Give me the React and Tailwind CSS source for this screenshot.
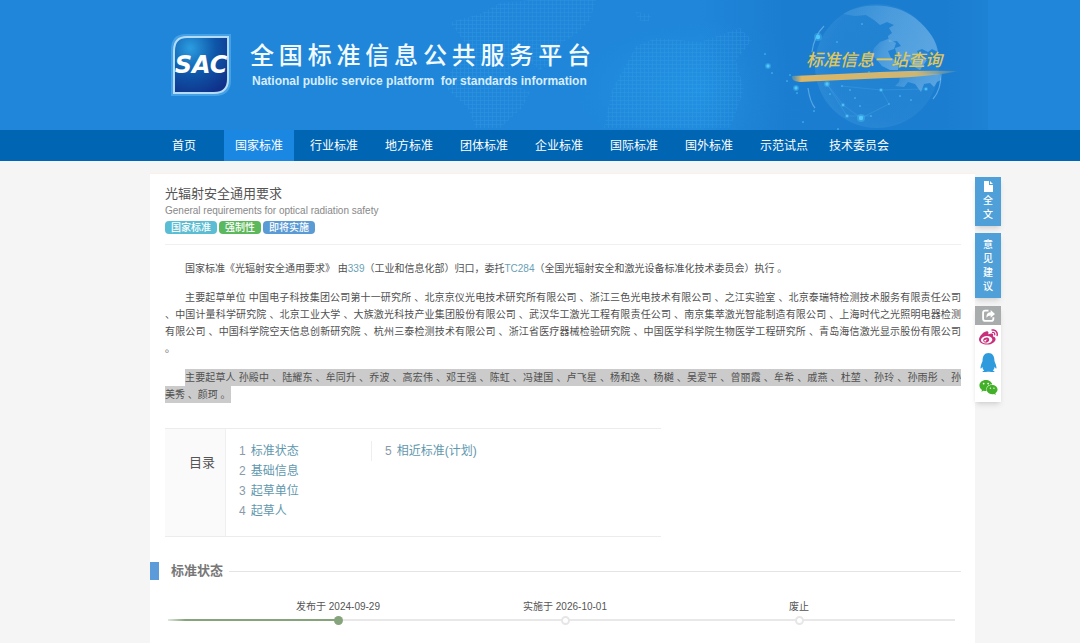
import React from 'react'
import { FaWeixin, FaQq, FaWeibo } from 'react-icons/fa'

const navItems = ['首页', '国家标准', '行业标准', '地方标准', '团体标准', '企业标准', '国际标准', '国外标准', '示范试点', '技术委员会']

const badges = [
  { label: '国家标准', className: 'bg-[#5bbdd3]' },
  { label: '强制性', className: 'bg-[#5cb85c]' },
  { label: '即将实施', className: 'bg-[#5b9bd5]' },
]

// each entry is one full line of the justified paragraph
const draftingUnits = [
  '、中国计量科学研究院 、北京工业大学 、大族激光科技产业集团股份有限公司 、武汉华工激光工程有限责任公司 、南京集萃激光智能制造有限公司 、上海时代之光照明电器检测',
  '有限公司 、中国科学院空天信息创新研究院 、杭州三泰检测技术有限公司 、浙江省医疗器械检验研究院 、中国医学科学院生物医学工程研究所 、青岛海信激光显示股份有限公司',
]

const tocLeft = ['标准状态', '基础信息', '起草单位', '起草人']

const dots = [
  [765, 54, 1], [768, 66, 3], [772, 73, 1], [790, 75, 1], [796, 88, 3], [797, 93, 1], [827, 84, 3], [818, 37, 4],
  [837, 42, 1], [830, 94, 1], [843, 105, 2], [855, 98, 1], [847, 116, 2], [861, 118, 4], [871, 116, 1], [881, 90, 2],
  [889, 104, 1], [860, 106, 1], [803, 122, 1], [838, 129, 1], [814, 111, 1], [869, 72, 1], [862, 24, 1], [926, 89, 2],
  [842, 86, 1], [850, 90, 1], [900, 96, 1], [911, 100, 1], [787, 81, 1],
]

function HeaderArt() {
  return (
    <svg className="absolute inset-0 h-full w-full" viewBox="0 0 1080 130" preserveAspectRatio="xMidYMid slice" aria-hidden="true">
      <defs>
        <pattern id="grid" width="4" height="4" patternUnits="userSpaceOnUse">
          <path d="M0 0H4M0 0V4" stroke="#46b4ee" strokeWidth="1" opacity=".55" />
        </pattern>
        <radialGradient id="shine" cx=".5" cy=".5" r=".5">
          <stop offset="0" stopColor="#2496e4" stopOpacity=".7" />
          <stop offset="1" stopColor="#2496e4" stopOpacity="0" />
        </radialGradient>
        <linearGradient id="shade" x1="0" x2="1">
          <stop offset="0" stopColor="#1b7ccf" stopOpacity="0" />
          <stop offset=".3" stopColor="#1b7ccf" stopOpacity=".9" />
          <stop offset=".85" stopColor="#1b7ccf" stopOpacity=".9" />
          <stop offset="1" stopColor="#1b7ccf" stopOpacity=".5" />
        </linearGradient>
        <radialGradient id="sphere" cx=".6" cy=".45" r=".6">
          <stop offset="0" stopColor="#4aa3e2" stopOpacity=".12" />
          <stop offset=".8" stopColor="#4aa3e2" stopOpacity=".18" />
          <stop offset="1" stopColor="#5cb0e8" stopOpacity=".22" />
        </radialGradient>
        <linearGradient id="land" x1="0" x2="1" y1="0" y2=".4">
          <stop offset="0" stopColor="#7dbbe9" stopOpacity=".15" />
          <stop offset=".5" stopColor="#7dbbe9" stopOpacity=".45" />
          <stop offset="1" stopColor="#86c0ec" stopOpacity=".55" />
        </linearGradient>
        <linearGradient id="brush" x1="0" x2="1">
          <stop offset="0" stopColor="#dcb765" stopOpacity=".2" />
          <stop offset=".06" stopColor="#dcb765" />
          <stop offset=".75" stopColor="#cdb574" />
          <stop offset="1" stopColor="#cdb574" stopOpacity=".1" />
        </linearGradient>
      </defs>
      <ellipse cx="700" cy="90" rx="130" ry="70" fill="url(#shine)" />
      <rect x="700" width="288" height="130" fill="url(#shade)" />
      <g fill="url(#grid)" opacity=".6">
        <path d="M450 22L480 14L500 3L530 0H596L590 20L576 34L560 44L552 62L540 70L528 60L508 70L512 84L530 92L522 108L500 128H476L468 108L448 90L450 72L470 50Z" />
        <path d="M636 12L652 14L648 22L638 20ZM636 46L656 38L700 42L740 28L752 40L736 60L744 90L730 128H604L612 90L622 72Z" />
      </g>
      <circle cx="877" cy="66" r="62" fill="url(#sphere)" />
      <g fill="url(#land)">
        <path d="M843 14C862 2 895 2 915 18C930 30 937 42 938 52L932 49L928 52L922 49L917 51L920 57L927 60L920 70L913 66L909 60L902 60L897 56L895 48L901 46L897 41L889 42L888 36L892 33L889 28L894 25L887 22L880 25L874 20L866 15L855 16Z" />
        <path d="M874 48L880 42L888 39L896 43L894 49L888 51L891 58L899 62L898 70L890 70L882 66L877 60L872 55Z" />
        <path d="M900 76L916 73L940 74L941 80L937 82L934 87L930 83L924 84L921 92L915 84L908 82L904 87L895 86L899 82Z" />
      </g>
      <path d="M812 52Q814 36 824 26M808 88Q810 102 815 108M941 74Q941 90 933 99" fill="none" stroke="#8fd0f6" strokeWidth="1.2" opacity=".5" />
      <path d="M841 86L881 90L889 104L861 118L843 105L827 84L847 116L871 116M881 90L926 89" fill="none" stroke="#55b4ee" strokeWidth=".5" opacity=".5" />
      {dots.map(([x, y, r]) => (
        <g key={`${x}-${y}`} fill="#4fc8fa">
          <circle cx={x} cy={y} r={r} opacity=".35" />
          <circle cx={x} cy={y} r={r * 0.55} />
        </g>
      ))}
      <path d="M792 76Q840 74 880 72Q925 70 958 71Q930 77 888 78Q840 80 800 82Q790 81 792 76Z" fill="url(#brush)" />
    </svg>
  )
}

function Logo() {
  return (
    <svg width="64" height="66" viewBox="0 0 64 66" role="img" aria-label="SAC" className="shrink-0">
      <defs>
        <radialGradient id="logoBg" cx=".3" cy=".2" r=".95">
          <stop offset="0" stopColor="#2b9de0" />
          <stop offset=".5" stopColor="#0e56a8" />
          <stop offset="1" stopColor="#102c86" />
        </radialGradient>
      </defs>
      <path d="M17 2H62V48Q62 64 46 64H2V18Q2 2 17 2Z" fill="#6cbcf2" opacity=".5" />
      <path d="M18 5H59V47Q59 61 45 61H5V19Q5 5 18 5Z" fill="url(#logoBg)" stroke="#b5dcfa" strokeWidth="2" />
      <text x="32" y="41" textAnchor="middle" fill="#fff" className="font-['DejaVu_Sans',sans-serif] text-[24px] font-bold italic">SAC</text>
    </svg>
  )
}

function Header() {
  return (
    <header>
      <div className="relative h-[130px] overflow-hidden bg-[#1f86d9]">
        <HeaderArt />
        <div className="relative flex h-full items-center justify-between pl-[169px] pr-[138px]">
          <div className="flex items-center gap-[17px]">
            <Logo />
            <div className="w-[341px] text-white">
              <h1 className="text-[24px] leading-[32px] font-medium text-[#f2faff] [text-align-last:justify]">全国标准信息公共服务平台</h1>
              <p className="whitespace-pre pl-0.5 text-[12px] leading-[18px] font-bold text-[#d8edfd]">National public service platform  for standards information</p>
            </div>
          </div>
          <p className="pb-2 text-[17px] leading-[24px] font-medium italic text-[#e0c75c]">标准信息一站查询</p>
        </div>
      </div>
      <nav className="bg-[#0065b3] pl-[149px]">
        <ul className="flex gap-[5px]">
          {navItems.map((item) => (
            <li key={item} className="w-[70px]">
              <a
                href="#"
                className={`block whitespace-nowrap pt-0.5 text-center text-[12px] leading-[29px] text-white ${item === '国家标准' ? 'bg-[#1a87e2]' : ''}`}
              >
                {item}
              </a>
            </li>
          ))}
        </ul>
      </nav>
    </header>
  )
}

function Toc() {
  return (
    <section className="mt-[25px] flex h-[109px] w-[496px] border-y border-[#ececec]">
      <h2 className="w-[61px] border-r border-[#f0f0f0] bg-[#fafafa] pl-6 pt-6 text-[13px] leading-[20px] text-[#555]">目录</h2>
      <ol className="w-[145px] pl-[13px] pt-[12px] text-[12px] leading-[20px]">
        {tocLeft.map((item, i) => (
          <li key={item} className="flex gap-[5px]">
            <span className="text-[#8a9aa8]">{i + 1}</span>
            <a href="#" className="text-[#5f98ae]">{item}</a>
          </li>
        ))}
      </ol>
      <ol start="5" className="mt-[12px] h-5 border-l border-[#eee] pl-[13px] text-[12px] leading-[20px]">
        <li className="flex gap-[5px]">
          <span className="text-[#8a9aa8]">5</span>
          <a href="#" className="text-[#5f98ae]">相近标准(计划)</a>
        </li>
      </ol>
    </section>
  )
}

function Step({ label, done }) {
  return (
    <li className="flex w-[100px] flex-col items-center gap-px">
      <span className="whitespace-nowrap">{label}</span>
      <span className={`h-[9px] w-[9px] rounded-full ${done ? 'bg-[#86a47c]' : 'border-2 border-[#e6e6e6] bg-white'}`} />
    </li>
  )
}

function Timeline() {
  return (
    <div className="relative mt-[18px] text-[10px] leading-[16px] text-[#555]">
      <div className="absolute top-[20px] right-[6px] left-[3px] h-[2px] bg-[#e8e8e8]">
        <div className="h-full w-[22%] bg-linear-to-r from-[#dfe8dc] via-[#86a47c] via-10% to-[#86a47c]" />
      </div>
      <ol className="relative flex pl-[123px]">
        <Step label="发布于 2024-09-29" done />
        <li className="w-[127px]" aria-hidden="true" />
        <Step label="实施于 2026-10-01" />
        <li className="w-[134px]" aria-hidden="true" />
        <Step label="废止" />
      </ol>
    </div>
  )
}

function SideTools() {
  const blue = 'block w-full bg-[#4fa0d8] text-center text-[10px] font-medium text-white shadow-md'
  return (
    <aside className="mt-[4px] w-[26px]">
      <button type="button" className={`${blue} h-[49px] leading-[14px]`}>
        <svg width="9" height="11" viewBox="0 0 9 11" className="mx-auto mb-0.5" fill="#fff">
          <path d="M0 0H5V4H9V11H0ZM6 0L9 3H6Z" />
        </svg>
        全<br />文
      </button>
      <button type="button" className={`${blue} mt-[7px] h-[65px] leading-[14px]`}>
        意<br />见<br />建<br />议
      </button>
      <div className="mt-[8px] flex h-[96px] flex-col items-center bg-white shadow-md">
        <button type="button" aria-label="分享" className="flex h-[19px] w-full items-center justify-center bg-[#a9acad]">
          <svg width="13" height="13" viewBox="0 0 12 12" fill="none">
            <path d="M6 1.500H3Q1 1.500 1 3.500V9Q1 11 3 11H8.500Q10.500 11 10.500 9V7.500" stroke="#fff" strokeWidth="1.700" />
            <path d="M4 8Q4 3 8 3V1L12 4.500L8 8V6Q5.500 6 4 8Z" fill="#fff" />
          </svg>
        </button>
        <a href="#" aria-label="微博" className="mt-[3px]"><FaWeibo size={19} color="#c8307c" /></a>
        <a href="#" aria-label="QQ" className="mt-[6px]"><FaQq size={19} color="#2f9bdc" /></a>
        <a href="#" aria-label="微信" className="mt-[6px]"><FaWeixin size={19} color="#43b02a" /></a>
      </div>
    </aside>
  )
}

export default function App() {
  return (
    <div className="min-h-screen bg-[#f5f5f5] font-['Liberation_Sans','Noto_Sans_CJK_SC',sans-serif]">
      <Header />
      <div className="flex items-start pt-3 pr-[79px] pl-[150px]">
        <main className="min-h-[470px] min-w-0 flex-1 border-t border-[#fdeee6] bg-white pr-[14px] pl-[15px]">
          <div className="border-b border-[#f0f0f0] pt-[11px] pb-[10px]">
            <h2 className="text-[13px] leading-[18px] text-[#555]">光辐射安全通用要求</h2>
            <p className="text-[10px] leading-[16px] text-[#888]">General requirements for optical radiation safety</p>
            <div className="mt-0.5 flex gap-[2px]">
              {badges.map((b) => (
                <span key={b.label} className={`rounded-sm px-1.5 text-[10px] leading-[13px] font-medium text-white ${b.className}`}>{b.label}</span>
              ))}
            </div>
          </div>

          <div className="pt-[15px] text-[10px] leading-[17px] text-[#505050]">
            <p className="pl-5">
              国家标准《光辐射安全通用要求》 由<a href="#" className="text-[#6a9fb5]">339</a>（工业和信息化部）归口，委托<a href="#" className="text-[#6a9fb5]">TC284</a>（全国光辐射安全和激光设备标准化技术委员会）执行 。
            </p>
            <p className="mt-[12px] [text-align-last:justify]">
              <span className="block pl-5">主要起草单位 中国电子科技集团公司第十一研究所 、北京京仪光电技术研究所有限公司 、浙江三色光电技术有限公司 、之江实验室 、北京泰瑞特检测技术服务有限责任公司</span>
              {draftingUnits.map((line) => (
                <span key={line} className="block">{line}</span>
              ))}
              <span className="block [text-align-last:left]">。</span>
            </p>
            <p className="mt-[12px]">
              <span className="ml-5 block bg-[#cbcbcb] [text-align-last:justify]">主要起草人 孙殿中 、陆耀东 、牟同升 、乔波 、高宏伟 、邓王强 、陈虹 、冯建国 、卢飞星 、杨和逸 、杨樾 、吴爱平 、曾丽霞 、牟希 、戚燕 、杜堃 、孙玲 、孙雨彤 、孙</span>
              <span className="inline-block bg-[#cbcbcb]">美秀 、颜珂 。</span>
            </p>
          </div>

          <Toc />

          <div className="mt-[24px] -ml-[15px] flex items-center">
            <span className="h-[18px] w-[9px] bg-[#5b9bd9]" />
            <h2 className="ml-3 mr-1.5 text-[13px] leading-[20px] font-bold text-[#777]">标准状态</h2>
            <span className="h-px flex-1 bg-[#e4e4e4]" />
          </div>
          <Timeline />
        </main>
        <SideTools />
      </div>
    </div>
  )
}
